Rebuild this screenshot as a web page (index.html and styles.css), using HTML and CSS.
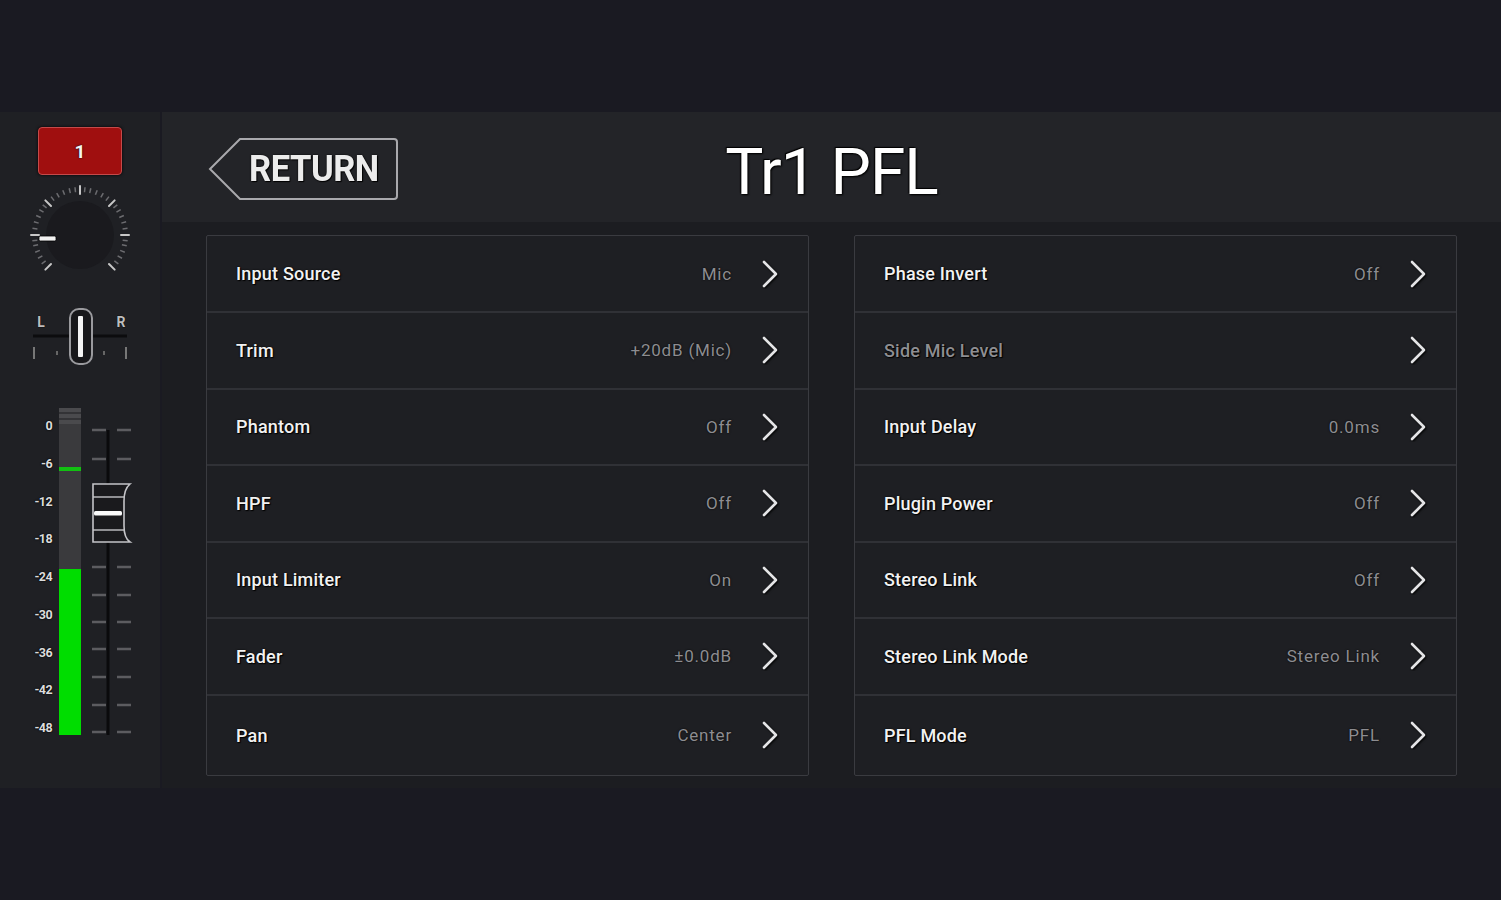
FILE: index.html
```html
<!DOCTYPE html>
<html>
<head>
<meta charset="utf-8">
<link rel="stylesheet" href="styles.css">
</head>
<body>
<div class="screen">
  <aside class="sidebar">
    <div class="badge">1</div>
    <svg class="knob" width="110" height="110" viewBox="0 0 110 110">
      <circle cx="55" cy="55" r="34" fill="#1a1a1e"/>
      <g stroke="#c8c8c8" stroke-width="2" stroke-linecap="round">
        <line x1="55" y1="6" x2="55" y2="14" transform="rotate(0 55 55)"/>
        <line x1="55" y1="6" x2="55" y2="14" transform="rotate(45 55 55)"/>
        <line x1="55" y1="6" x2="55" y2="14" transform="rotate(-45 55 55)"/>
        <line x1="55" y1="6" x2="55" y2="14" transform="rotate(90 55 55)"/>
        <line x1="55" y1="6" x2="55" y2="14" transform="rotate(-90 55 55)"/>
        <line x1="55" y1="6" x2="55" y2="14" transform="rotate(135 55 55)"/>
        <line x1="55" y1="6" x2="55" y2="14" transform="rotate(-135 55 55)"/>
      </g>
      <g stroke="#6c6c70" stroke-width="1.5">
        <line x1="55" y1="7" x2="55" y2="12" transform="rotate(-127 55 55)"/>
        <line x1="55" y1="7" x2="55" y2="12" transform="rotate(-119 55 55)"/>
        <line x1="55" y1="7" x2="55" y2="12" transform="rotate(-111 55 55)"/>
        <line x1="55" y1="7" x2="55" y2="12" transform="rotate(-103 55 55)"/>
        <line x1="55" y1="7" x2="55" y2="12" transform="rotate(-97 55 55)"/>
        <line x1="55" y1="7" x2="55" y2="12" transform="rotate(-82 55 55)"/>
        <line x1="55" y1="7" x2="55" y2="12" transform="rotate(-74 55 55)"/>
        <line x1="55" y1="7" x2="55" y2="12" transform="rotate(-66 55 55)"/>
        <line x1="55" y1="7" x2="55" y2="12" transform="rotate(-58 55 55)"/>
        <line x1="55" y1="7" x2="55" y2="12" transform="rotate(-51 55 55)"/>
        <line x1="55" y1="7" x2="55" y2="12" transform="rotate(-37 55 55)"/>
        <line x1="55" y1="7" x2="55" y2="12" transform="rotate(-29 55 55)"/>
        <line x1="55" y1="7" x2="55" y2="12" transform="rotate(-21 55 55)"/>
        <line x1="55" y1="7" x2="55" y2="12" transform="rotate(-13 55 55)"/>
        <line x1="55" y1="7" x2="55" y2="12" transform="rotate(-6 55 55)"/>
        <line x1="55" y1="7" x2="55" y2="12" transform="rotate(6 55 55)"/>
        <line x1="55" y1="7" x2="55" y2="12" transform="rotate(13 55 55)"/>
        <line x1="55" y1="7" x2="55" y2="12" transform="rotate(21 55 55)"/>
        <line x1="55" y1="7" x2="55" y2="12" transform="rotate(29 55 55)"/>
        <line x1="55" y1="7" x2="55" y2="12" transform="rotate(37 55 55)"/>
        <line x1="55" y1="7" x2="55" y2="12" transform="rotate(51 55 55)"/>
        <line x1="55" y1="7" x2="55" y2="12" transform="rotate(58 55 55)"/>
        <line x1="55" y1="7" x2="55" y2="12" transform="rotate(66 55 55)"/>
        <line x1="55" y1="7" x2="55" y2="12" transform="rotate(74 55 55)"/>
        <line x1="55" y1="7" x2="55" y2="12" transform="rotate(82 55 55)"/>
        <line x1="55" y1="7" x2="55" y2="12" transform="rotate(97 55 55)"/>
        <line x1="55" y1="7" x2="55" y2="12" transform="rotate(103 55 55)"/>
        <line x1="55" y1="7" x2="55" y2="12" transform="rotate(111 55 55)"/>
        <line x1="55" y1="7" x2="55" y2="12" transform="rotate(119 55 55)"/>
        <line x1="55" y1="7" x2="55" y2="12" transform="rotate(127 55 55)"/>
      </g>
      <rect x="14" y="56" width="17" height="5" rx="1.5" fill="#f2f2f2" stroke="#000" stroke-width="0.8"/>
    </svg>
    <svg class="pan" width="110" height="70" viewBox="0 0 110 70">
      <text x="16" y="24" class="pan-lr" text-anchor="middle">L</text>
      <text x="96" y="24" class="pan-lr" text-anchor="middle">R</text>
      <line x1="8" y1="33" x2="102" y2="33" stroke="#0c0c0e" stroke-width="3"/>
      <line x1="9" y1="44" x2="9" y2="56" stroke="#777" stroke-width="2"/>
      <line x1="101" y1="44" x2="101" y2="56" stroke="#777" stroke-width="2"/>
      <line x1="32" y1="48" x2="32" y2="52" stroke="#666" stroke-width="2"/>
      <line x1="79" y1="48" x2="79" y2="52" stroke="#666" stroke-width="2"/>
      <rect x="45" y="6" width="22" height="55" rx="9" fill="#18181b" stroke="#9a9a9e" stroke-width="2"/>
      <rect x="53" y="13" width="5" height="41" rx="1" fill="#f4f4f4"/>
    </svg>
    <div class="meter">
      <div class="scale">
        <span>0</span><span>-6</span><span>-12</span><span>-18</span><span>-24</span><span>-30</span><span>-36</span><span>-42</span><span>-48</span>
      </div>
      <div class="bar">
        <div class="bar-top"></div>
        <div class="peak"></div>
        <div class="fill" style="height: 166px"></div>
      </div>
      <svg class="fader" width="50" height="335" viewBox="0 0 50 335">
        <line x1="20" y1="25" x2="20" y2="330" stroke="#0a0a0c" stroke-width="3"/>
        <g stroke="#5c5c60" stroke-width="2.5">
          <line x1="4" y1="25" x2="18" y2="25"/><line x1="29" y1="25" x2="43" y2="25"/>
          <line x1="4" y1="54" x2="18" y2="54"/><line x1="29" y1="54" x2="43" y2="54"/>
          <line x1="4" y1="162" x2="18" y2="162"/><line x1="29" y1="162" x2="43" y2="162"/>
          <line x1="4" y1="190" x2="18" y2="190"/><line x1="29" y1="190" x2="43" y2="190"/>
          <line x1="4" y1="217" x2="18" y2="217"/><line x1="29" y1="217" x2="43" y2="217"/>
          <line x1="4" y1="244" x2="18" y2="244"/><line x1="29" y1="244" x2="43" y2="244"/>
          <line x1="4" y1="272" x2="18" y2="272"/><line x1="29" y1="272" x2="43" y2="272"/>
          <line x1="4" y1="300" x2="18" y2="300"/><line x1="29" y1="300" x2="43" y2="300"/>
          <line x1="4" y1="327" x2="18" y2="327"/><line x1="29" y1="327" x2="43" y2="327"/>
        </g>
        <path d="M5 79 H42 Q36 84 36 96 V121 Q36 133 42 137 H5 Z" fill="#1a1a1d" stroke="#c4c4c8" stroke-width="1.6"/>
        <line x1="5" y1="92" x2="36" y2="92" stroke="#c4c4c8" stroke-width="1.4"/>
        <line x1="5" y1="125" x2="36" y2="125" stroke="#c4c4c8" stroke-width="1.4"/>
        <rect x="6" y="106" width="28" height="4.5" rx="1.5" fill="#fafafa"/>
      </svg>
    </div>
  </aside>

  <main class="main">
    <header class="header">
      <div class="header-left">
        <button class="return">
          <svg class="return-shape" width="192" height="64" viewBox="0 0 192 64">
            <path d="M32 2 H186 Q189 2 189 5 V59 Q189 62 186 62 H32 L2 32 Z" fill="none" stroke="#a9a9ad" stroke-width="2"/>
          </svg>
          <span class="return-text">RETURN</span>
        </button>
      </div>
      <h1 class="title">Tr1 PFL</h1>
      <div></div>
    </header>

    <section class="panels">
      <div class="panel">
        <div class="row"><span class="label">Input Source</span><span class="value">Mic</span><svg class="chev" width="20" height="30" viewBox="0 0 20 30"><path d="M4 3 L16 15 L4 27" /></svg></div>
        <div class="row"><span class="label">Trim</span><span class="value">+20dB (Mic)</span><svg class="chev" width="20" height="30" viewBox="0 0 20 30"><path d="M4 3 L16 15 L4 27" /></svg></div>
        <div class="row"><span class="label">Phantom</span><span class="value">Off</span><svg class="chev" width="20" height="30" viewBox="0 0 20 30"><path d="M4 3 L16 15 L4 27" /></svg></div>
        <div class="row"><span class="label">HPF</span><span class="value">Off</span><svg class="chev" width="20" height="30" viewBox="0 0 20 30"><path d="M4 3 L16 15 L4 27" /></svg></div>
        <div class="row"><span class="label">Input Limiter</span><span class="value">On</span><svg class="chev" width="20" height="30" viewBox="0 0 20 30"><path d="M4 3 L16 15 L4 27" /></svg></div>
        <div class="row"><span class="label">Fader</span><span class="value">±0.0dB</span><svg class="chev" width="20" height="30" viewBox="0 0 20 30"><path d="M4 3 L16 15 L4 27" /></svg></div>
        <div class="row"><span class="label">Pan</span><span class="value">Center</span><svg class="chev" width="20" height="30" viewBox="0 0 20 30"><path d="M4 3 L16 15 L4 27" /></svg></div>
      </div>
      <div class="panel">
        <div class="row"><span class="label">Phase Invert</span><span class="value">Off</span><svg class="chev" width="20" height="30" viewBox="0 0 20 30"><path d="M4 3 L16 15 L4 27" /></svg></div>
        <div class="row"><span class="label dim">Side Mic Level</span><span class="value"></span><svg class="chev" width="20" height="30" viewBox="0 0 20 30"><path d="M4 3 L16 15 L4 27" /></svg></div>
        <div class="row"><span class="label">Input Delay</span><span class="value">0.0ms</span><svg class="chev" width="20" height="30" viewBox="0 0 20 30"><path d="M4 3 L16 15 L4 27" /></svg></div>
        <div class="row"><span class="label">Plugin Power</span><span class="value">Off</span><svg class="chev" width="20" height="30" viewBox="0 0 20 30"><path d="M4 3 L16 15 L4 27" /></svg></div>
        <div class="row"><span class="label">Stereo Link</span><span class="value">Off</span><svg class="chev" width="20" height="30" viewBox="0 0 20 30"><path d="M4 3 L16 15 L4 27" /></svg></div>
        <div class="row"><span class="label">Stereo Link Mode</span><span class="value">Stereo Link</span><svg class="chev" width="20" height="30" viewBox="0 0 20 30"><path d="M4 3 L16 15 L4 27" /></svg></div>
        <div class="row"><span class="label">PFL Mode</span><span class="value">PFL</span><svg class="chev" width="20" height="30" viewBox="0 0 20 30"><path d="M4 3 L16 15 L4 27" /></svg></div>
      </div>
    </section>
  </main>
</div>
</body>
</html>
```

FILE: styles.css
```css
* { box-sizing: border-box; }

html, body {
  margin: 0;
  padding: 0;
  background: #1a1a22;
  width: 1501px;
  height: 900px;
  overflow: hidden;
  font-family: Roboto, "Liberation Sans", sans-serif;
}

.screen {
  margin-top: 112px;
  height: 676px;
  display: flex;
  gap: 2px;
}

/* ---------- Sidebar ---------- */
.sidebar {
  width: 160px;
  flex: none;
  background: #1f2024;
  display: flex;
  flex-direction: column;
  align-items: center;
}

.badge {
  margin-top: 15px;
  width: 84px;
  height: 48px;
  background: #a00f0f;
  border: 1.5px solid #c44a4a;
  border-radius: 4px;
  box-shadow: 0 0 3px #000;
  color: #f4f4f4;
  font-weight: 700;
  font-size: 19px;
  display: flex;
  align-items: center;
  justify-content: center;
  text-shadow: 0 0 2px #000;
}

.knob {
  margin-top: 5px;
  display: block;
}

.pan {
  margin-top: 13px;
  display: block;
}

.pan-lr {
  font-family: Roboto, "Liberation Sans", sans-serif;
  font-weight: 700;
  font-size: 14px;
  fill: #bdbdbd;
  stroke: #000;
  stroke-width: 0.6px;
  paint-order: stroke;
}

.meter {
  align-self: flex-start;
  margin-left: 24px;
  margin-top: 32px;
  height: 335px;
  display: flex;
  align-items: flex-start;
}

.scale {
  flex: none;
  width: 28px;
  margin-top: 14px;
  height: 316px;
  display: flex;
  flex-direction: column;
  justify-content: space-between;
  align-items: flex-end;
  font-size: 12.5px;
  font-weight: 700;
  color: #dcdcdc;
  text-shadow: 0 0 2px #000, 0 0 1px #000;
  letter-spacing: -0.6px;
}

.scale span { line-height: 14px; }

.bar {
  flex: none;
  margin-left: 7px;
  margin-top: 3px;
  width: 22px;
  height: 327px;
  background: #3a3a3d;
  position: relative;
  display: flex;
  flex-direction: column;
  justify-content: flex-end;
}

.bar-top {
  position: absolute;
  left: 0;
  right: 0;
  top: 0;
  height: 16px;
  background: repeating-linear-gradient(#4a4a4d 0 4px, #333336 4px 6px);
}

.peak {
  position: absolute;
  left: 0;
  right: 0;
  top: 59px;
  height: 4px;
  background: #12c012;
}

.fill {
  width: 100%;
  background: #00dd00;
}

.fader {
  flex: none;
  margin-left: 7px;
  display: block;
}

/* ---------- Main ---------- */
.main {
  flex: 1;
  background: #1c1d21;
  display: flex;
  flex-direction: column;
}

.header {
  height: 110px;
  background: #232428;
  display: grid;
  grid-template-columns: 1fr auto 1fr;
  align-items: center;
}

.header-left {
  padding-left: 46px;
  padding-top: 4px;
}

.return {
  position: relative;
  width: 192px;
  height: 64px;
  padding: 0 0 0 41px;
  margin: 0;
  border: none;
  background: transparent;
  display: flex;
  align-items: center;
  cursor: pointer;
}

.return-shape {
  position: absolute;
  left: 0;
  top: 0;
}

.return-text {
  position: relative;
  font-family: Roboto, "Liberation Sans", sans-serif;
  font-weight: 700;
  font-size: 36px;
  color: #ececec;
  letter-spacing: -0.5px;
  display: inline-block;
  transform: scaleX(0.96);
  transform-origin: left center;
  text-shadow: 0 0 2px #000, 1px 1px 1px #000;
}

.title {
  margin: 0;
  padding-top: 10px;
  font-family: Roboto, "Liberation Sans", sans-serif;
  font-weight: 400;
  font-size: 64px;
  color: #ffffff;
  letter-spacing: -1px;
  text-shadow: 0 0 2px #000, 1px 1px 2px #000, -1px -1px 1px #000;
}

.panels {
  display: flex;
  gap: 45px;
  padding: 13px 44px 0 44px;
}

.panel {
  flex: 1;
  height: 541px;
  background: #1e1f23;
  border: 1px solid #3a3b40;
  border-radius: 2px;
  display: flex;
  flex-direction: column;
}

.row {
  height: 76.5px;
  flex: none;
  display: flex;
  align-items: center;
  padding: 0 28px 0 29px;
  border-top: 2px solid #303136;
}

.row:first-child {
  border-top: none;
  height: 75px;
}

.row:last-child {
  flex: 1;
  height: auto;
}

.label {
  flex: 1;
  font-size: 18px;
  font-weight: 500;
  color: #f2f2f2;
  letter-spacing: 0.2px;
  text-shadow: 0 0 2px #000, 1px 1px 1px #000;
}

.label.dim {
  color: #8e8e92;
}

.value {
  font-size: 17px;
  color: #8d8d91;
  letter-spacing: 0.8px;
  text-shadow: 0 0 2px #000;
  margin-right: 28px;
}

.chev {
  display: block;
  flex: none;
}

.chev path {
  fill: none;
  stroke: #e4e4e6;
  stroke-width: 2.6;
  stroke-linecap: round;
  stroke-linejoin: round;
  filter: drop-shadow(1px 1px 1px #000);
}
```
